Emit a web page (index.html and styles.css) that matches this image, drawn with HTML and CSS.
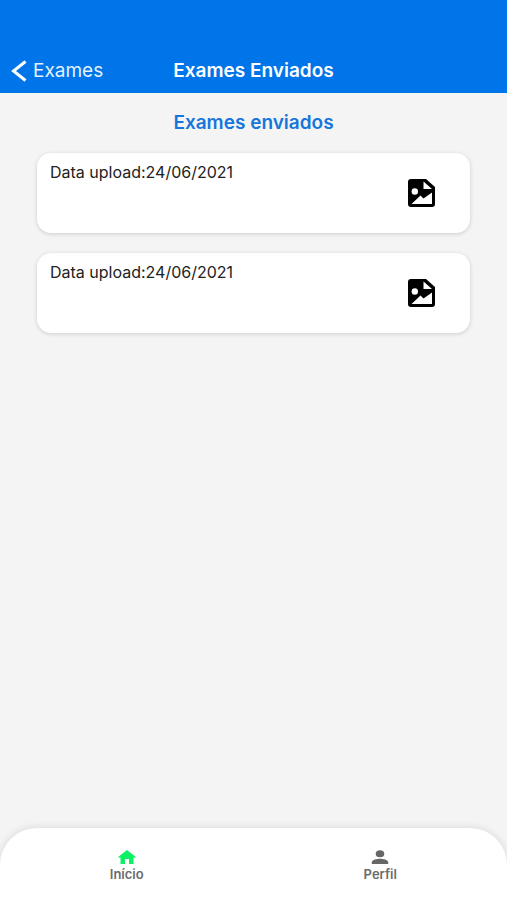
FILE: index.html
```html
<!DOCTYPE html>
<html lang="pt-BR">
<head>
<meta charset="utf-8">
<meta name="viewport" content="width=device-width, initial-scale=1">
<title>Exames Enviados</title>
<link rel="stylesheet" href="styles.css">
</head>
<body>
<header class="topbar">
  <a class="back" href="#exames">
    <svg class="back-icon" viewBox="0 0 16 22" aria-hidden="true"><path d="M14.500 1.500 2.500 11 14.500 20.500"/></svg>
    <span>Exames</span>
  </a>
  <h1 class="title">Exames Enviados</h1>
</header>
<main class="content">
  <h2 class="heading">Exames enviados</h2>
  <ul class="list">
    <li class="card">
      <p class="date">Data upload:24/06/2021</p>
      <button class="open" type="button" aria-label="Abrir imagem">
        <svg class="file-icon" viewBox="0 0 27 28" aria-hidden="true">
          <path d="M3 0H18L27 8V25Q27 28 24 28H3Q0 28 0 25V3Q0 0 3 0Z"/>
          <path class="cut" d="M15.500 2.500V10H24ZM3.500 25 12.500 16.500 15.500 19.500 24 13.500V25Z"/>
          <circle class="cut" cx="6.800" cy="12.500" r="3.200"/>
        </svg>
      </button>
    </li>
    <li class="card">
      <p class="date">Data upload:24/06/2021</p>
      <button class="open" type="button" aria-label="Abrir imagem">
        <svg class="file-icon" viewBox="0 0 27 28" aria-hidden="true">
          <path d="M3 0H18L27 8V25Q27 28 24 28H3Q0 28 0 25V3Q0 0 3 0Z"/>
          <path class="cut" d="M15.500 2.500V10H24ZM3.500 25 12.500 16.500 15.500 19.500 24 13.500V25Z"/>
          <circle class="cut" cx="6.800" cy="12.500" r="3.200"/>
        </svg>
      </button>
    </li>
  </ul>
</main>
<nav class="tabs">
  <a class="tab" href="#inicio">
    <svg class="tab-icon home" viewBox="0 0 20 14" aria-hidden="true"><path d="M8 14V9H12V14H16.500V7.500H19.500L10 0 0.500 7.500H3.500V14Z"/></svg>
    <span>Início</span>
  </a>
  <a class="tab" href="#perfil">
    <svg class="tab-icon" viewBox="0 0 20 14" aria-hidden="true"><ellipse cx="10" cy="3.700" rx="4.300" ry="3.500"/><path d="M1.800 14V12.200C1.800 9.800 7 8.700 10 8.700S18.200 9.800 18.200 12.200V14Z"/></svg>
    <span>Perfil</span>
  </a>
</nav>
</body>
</html>
```
FILE: styles.css
```css
* {
  box-sizing: border-box;
}

body {
  margin: 0;
  min-height: 100vh;
  display: flex;
  flex-direction: column;
  background: #f4f4f4;
  color: #222;
  font-family: Inter, "Liberation Sans", sans-serif;
}

.topbar {
  display: grid;
  grid-template-columns: 1fr auto 1fr;
  align-items: center;
  padding: 56px 11px 7px;
  background: #0075e9;
  color: #fff;
  line-height: 30px;
}

.back {
  display: flex;
  align-items: center;
  gap: 6px;
  color: #e4f1ff;
  font-size: 19px;
  text-decoration: none;
}

.back-icon {
  width: 16px;
  height: 22px;
  fill: none;
  stroke: #fff;
  stroke-width: 3;
}

.title {
  margin: 0;
  font-size: 19px;
  font-weight: 600;
}

.content {
  flex: 1;
  padding: 18px 37px;
}

.heading {
  margin: 0 0 18px;
  color: #1676dc;
  font-size: 19px;
  font-weight: 600;
  line-height: 24px;
  text-align: center;
}

.list {
  display: grid;
  gap: 20px;
  margin: 0;
  padding: 0;
  list-style: none;
}

.card {
  display: flex;
  align-items: center;
  justify-content: space-between;
  min-height: 80px;
  padding: 8px 35px 8px 13px;
  border-radius: 14px;
  background: #fff;
  box-shadow: 0 1px 4px rgba(0, 0, 0, 0.16);
}

.date {
  align-self: flex-start;
  margin: 0;
  font-size: 16px;
  line-height: 22px;
}

.open {
  display: flex;
  padding: 0;
  border: 0;
  background: none;
}

.file-icon {
  width: 27px;
  height: 28px;
}

.cut {
  fill: #fff;
}

.tabs {
  display: grid;
  grid-template-columns: 1fr 1fr;
  min-height: 72px;
  padding: 22px 0 18px;
  border-radius: 37px 37px 0 0;
  background: #fff;
  box-shadow: 0 0 8px rgba(0, 0, 0, 0.12);
}

.tab {
  display: flex;
  flex-direction: column;
  align-items: center;
  gap: 2px;
  color: #6b6b6b;
  font-size: 13px;
  font-weight: 600;
  line-height: 16px;
  text-decoration: none;
}

.tab-icon {
  width: 20px;
  height: 14px;
  fill: #666;
}

.home {
  fill: #0df066;
}
```
